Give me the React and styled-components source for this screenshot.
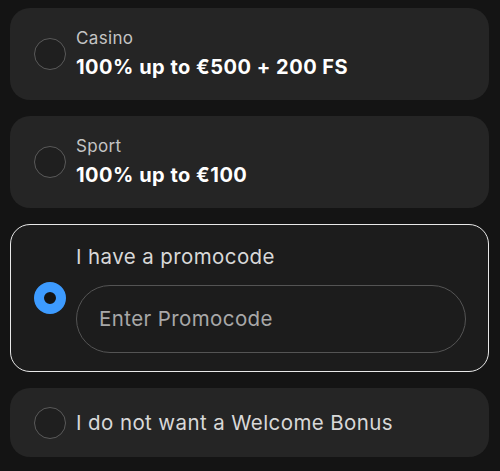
import React, { useState } from "react";
import styled, { createGlobalStyle } from "styled-components";

const GlobalStyle = createGlobalStyle`
  body {
    margin: 0;
    background: #141414;
    font-family: Inter, "Noto Sans", sans-serif;
    -webkit-font-smoothing: antialiased;
  }
`;

const List = styled.div`
  display: flex;
  flex-direction: column;
  gap: 16px;
  padding: 8px 11px 14px 10px;
`;

const Card = styled.label`
  display: flex;
  align-items: center;
  gap: 10px;
  box-sizing: border-box;
  min-height: ${(p) => p.$height}px;
  padding: 0 22px 0 23px;
  border-radius: 20px;
  background: ${(p) => (p.$active ? "#1c1c1c" : "#252525")};
  border: 1.5px solid ${(p) => (p.$active ? "#e8e8e8" : "transparent")};
  cursor: pointer;
`;

const Radio = styled.span`
  flex: none;
  box-sizing: border-box;
  width: 32px;
  height: 32px;
  border-radius: 50%;
  border: ${(p) => (p.$checked ? "10px solid #3d9bff" : "1px solid #5a5a5a")};
  background: ${(p) => (p.$checked ? "#141414" : "#1f1f1f")};
`;

const Body = styled.div`
  display: flex;
  flex-direction: column;
  flex: 1;
  gap: ${(p) => p.$gap || 0}px;
`;

const Caption = styled.div`
  font-size: 17px;
  line-height: 22px;
  color: #c4c4c4;
  letter-spacing: 0.35px;
`;

const Title = styled.div`
  font-size: 20px;
  line-height: 28px;
  font-weight: 700;
  color: #ffffff;
  letter-spacing: 0.5px;
`;

const Label = styled.div`
  font-size: 20.5px;
  line-height: 26px;
  color: #d8d8d8;
  letter-spacing: 0.4px;
`;

const Input = styled.input`
  box-sizing: border-box;
  width: 100%;
  height: 68px;
  border-radius: 34px;
  border: 1px solid #545454;
  background: transparent;
  padding: 0 22px;
  font-family: inherit;
  font-size: 20.5px;
  letter-spacing: 0.4px;
  color: #fff;
  outline: none;

  &::placeholder {
    color: #a8a8a8;
  }
`;

const offers = [
  { id: "casino", caption: "Casino", title: "100% up to €500 + 200 FS" },
  { id: "sport", caption: "Sport", title: "100% up to €100" },
];

export default function App() {
  const [selected, setSelected] = useState("promo");

  return (
    <>
      <GlobalStyle />
      <List>
        {offers.map((o) => (
          <Card key={o.id} $height={92} onClick={() => setSelected(o.id)} $active={selected === o.id}>
            <Radio $checked={selected === o.id} />
            <Body $gap={4}>
              <Caption>{o.caption}</Caption>
              <Title>{o.title}</Title>
            </Body>
          </Card>
        ))}
        <Card $height={148} $active={selected === "promo"} onClick={() => setSelected("promo")}>
          <Radio $checked={selected === "promo"} />
          <Body $gap={15}>
            <Label>I have a promocode</Label>
            <Input placeholder="Enter Promocode" />
          </Body>
        </Card>
        <Card $height={69} $active={selected === "none"} onClick={() => setSelected("none")}>
          <Radio $checked={selected === "none"} />
          <Body>
            <Label>I do not want a Welcome Bonus</Label>
          </Body>
        </Card>
      </List>
    </>
  );
}
